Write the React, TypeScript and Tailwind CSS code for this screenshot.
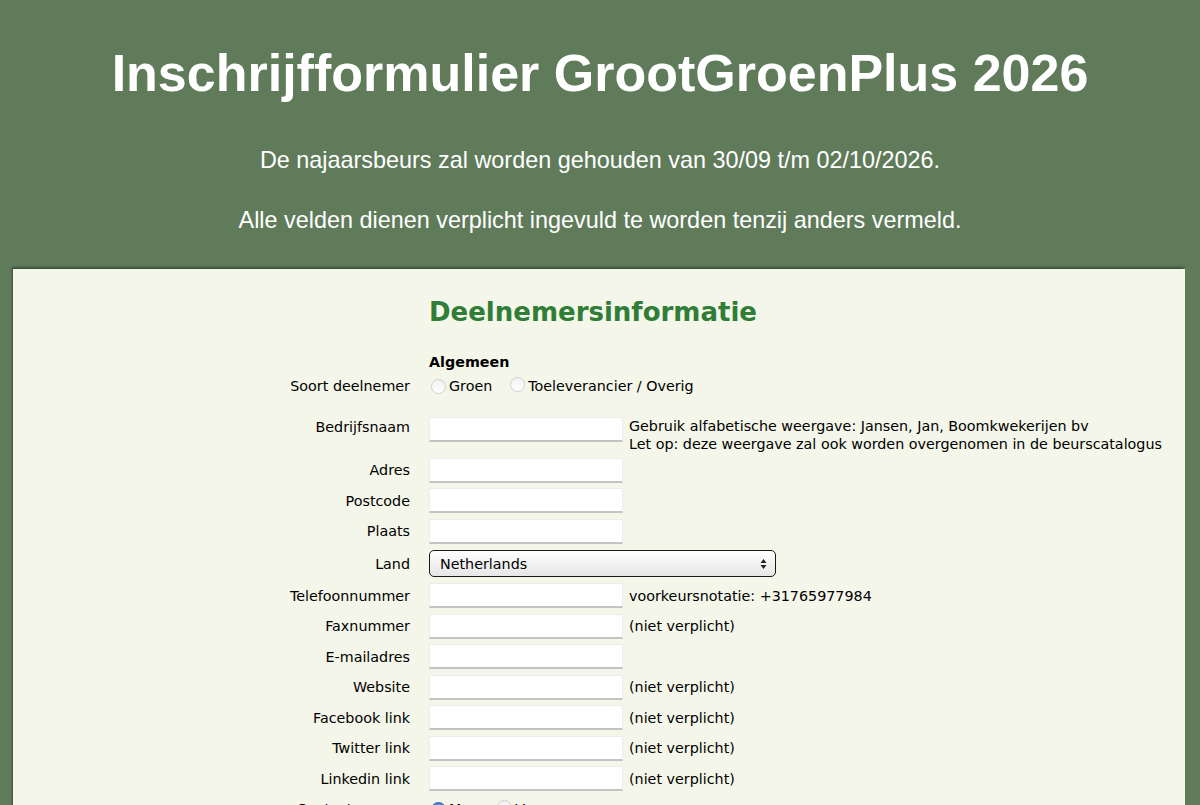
import React from "react";

const verdana = "font-['DejaVu_Sans',Verdana,sans-serif]";

function Radio({ checked = false }: { checked?: boolean }) {
  return (
    <span
      className={
        checked
          ? "inline-block h-[15px] w-[15px] rounded-full bg-[#3b7ddd] border border-[#2f66b8] shadow-[inset_0_0_0_3.5px_#4a8ae6] relative"
          : "inline-block h-[15px] w-[15px] rounded-full border border-[#d0d0d0] bg-gradient-to-b from-[#f2f2f2] to-white"
      }
    >
      {checked && <span className="absolute left-[4px] top-[4px] h-[5px] w-[5px] rounded-full bg-white" />}
    </span>
  );
}

function TextInput() {
  return (
    <input
      type="text"
      className="h-[25px] w-[194px] bg-white border border-[#ececec] border-b-[#c3c3c3] border-b-2 outline-none"
    />
  );
}

function Row({ label, note, tall = false, children }: { label: string; note?: string; tall?: boolean; children?: React.ReactNode }) {
  return (
    <div className={`flex items-center ${tall ? "h-[34px]" : "h-[30.5px]"}`}>
      <div className="w-[397px] text-right">{label}</div>
      <div className="ml-[19px] flex items-center">{children ?? <TextInput />}</div>
      {note && <div className="ml-[6px]">{note}</div>}
    </div>
  );
}

export default function App() {
  return (
    <div className="min-h-[805px] bg-[#5f7b5a] font-['Liberation_Sans',Arial,sans-serif]">
      <header className="text-center text-white">
        <h1 className="pt-[43px] text-[52px] leading-[60px] font-bold">Inschrijfformulier GrootGroenPlus 2026</h1>
        <p className="mt-[44px] text-[23.4px] leading-[26px]">De najaarsbeurs zal worden gehouden van 30/09 t/m 02/10/2026.</p>
        <p className="mt-[34px] text-[23.4px] leading-[26px]">Alle velden dienen verplicht ingevuld te worden tenzij anders vermeld.</p>
      </header>

      <main
        className={`mt-[36px] ml-[13px] mr-[15px] bg-[#f4f6e9] pb-10 text-[14.3px] leading-[18px] text-black shadow-[-1px_-2px_2px_rgba(0,0,0,0.35)] ${verdana}`}
      >
        <h2 className="pt-[26px] pl-[416px] text-[26px] leading-[34px] font-bold text-[#2f7d37]">Deelnemersinformatie</h2>

        <div className="mt-[24px] pl-[416px] font-bold">Algemeen</div>

        <div className="mt-[3px] flex h-[24px] items-center">
          <div className="w-[397px] text-right">Soort deelnemer</div>
          <div className="ml-[21px] flex items-center">
            <Radio />
            <span className="ml-[3px]">Groen</span>
            <span className="ml-[18px]">
              <Radio />
            </span>
            <span className="ml-[3px]">Toeleverancier / Overig</span>
          </div>
        </div>

        <div className="mt-[15px] flex h-[42px] items-start">
          <div className="mt-[5px] w-[397px] text-right">Bedrijfsnaam</div>
          <div className="ml-[19px] mt-[4px]">
            <TextInput />
          </div>
          <div className="ml-[6px] mt-[4px]">
            <div>Gebruik alfabetische weergave: Jansen, Jan, Boomkwekerijen bv</div>
            <div>Let op: deze weergave zal ook worden overgenomen in de beurscatalogus</div>
          </div>
        </div>

        <Row label="Adres" />
        <Row label="Postcode" />
        <Row label="Plaats" />
        <Row label="Land" tall>
          <div className="flex h-[27px] w-[347px] items-center justify-between rounded-[5px] border border-[#1a1a1a] bg-gradient-to-b from-white to-[#e6e6e6] pl-[10px] pr-[8px]">
            <span>Netherlands</span>
            <svg width="7" height="12" viewBox="0 0 7 12">
              <path d="M3.5 1 L6.5 5 L0.5 5 Z" fill="#222" />
              <path d="M3.5 11 L6.5 7 L0.5 7 Z" fill="#222" />
            </svg>
          </div>
        </Row>
        <Row label="Telefoonnummer" note="voorkeursnotatie: +31765977984" />
        <Row label="Faxnummer" note="(niet verplicht)" />
        <Row label="E-mailadres" />
        <Row label="Website" note="(niet verplicht)" />
        <Row label="Facebook link" note="(niet verplicht)" />
        <Row label="Twitter link" note="(niet verplicht)" />
        <Row label="Linkedin link" note="(niet verplicht)" />

        <div className="flex h-[30.5px] items-center">
          <div className="w-[397px] text-right">Contactpersoon</div>
          <div className="ml-[21px] flex items-center">
            <Radio checked />
            <span className="ml-[3px]">Man</span>
            <span className="ml-[18px]">
              <Radio />
            </span>
            <span className="ml-[3px]">Vrouw</span>
          </div>
        </div>
      </main>
    </div>
  );
}
